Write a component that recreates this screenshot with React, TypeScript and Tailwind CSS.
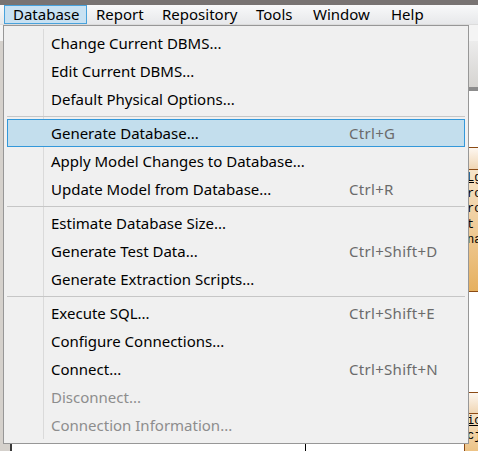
type Item = { label: string; shortcut?: string; disabled?: boolean; active?: boolean };

const groups: Item[][] = [
  [
    { label: "Change Current DBMS..." },
    { label: "Edit Current DBMS..." },
    { label: "Default Physical Options..." },
  ],
  [
    { label: "Generate Database...", shortcut: "Ctrl+G", active: true },
    { label: "Apply Model Changes to Database..." },
    { label: "Update Model from Database...", shortcut: "Ctrl+R" },
  ],
  [
    { label: "Estimate Database Size..." },
    { label: "Generate Test Data...", shortcut: "Ctrl+Shift+D" },
    { label: "Generate Extraction Scripts..." },
  ],
  [
    { label: "Execute SQL...", shortcut: "Ctrl+Shift+E" },
    { label: "Configure Connections..." },
    { label: "Connect...", shortcut: "Ctrl+Shift+N" },
    { label: "Disconnect...", disabled: true },
    { label: "Connection Information...", disabled: true },
  ],
];

const menus = [
  { label: "Database", w: "w-[83px]", open: true },
  { label: "Report", w: "w-[66px]" },
  { label: "Repository", w: "w-[94px]" },
  { label: "Tools", w: "w-[57px]" },
  { label: "Window", w: "w-[78px]" },
  { label: "Help", w: "w-[50px]" },
];

function MenuRow({ item }: { item: Item }) {
  return (
    <div
      className={
        "mx-[3px] grid h-[28px] grid-cols-[298px_1fr] items-center border pl-[43px] " +
        (item.active ? "border-[#3398da] bg-[#c3deed]" : "border-transparent")
      }
    >
      <span className={item.disabled ? "text-[#8d8d8d]" : "text-black"}>{item.label}</span>
      <span className="tracking-[0.3px] text-[#6b6b6b]">{item.shortcut}</span>
    </div>
  );
}

export default function App() {
  return (
    <div className="relative h-[451px] w-[478px] overflow-hidden bg-white font-['Noto_Sans',sans-serif] text-[15px]">
      <div className="h-[5px] bg-[#787372]" />
      <div className="flex h-[20px] items-stretch border-b border-[#dcdcdc] bg-gradient-to-b from-[#f8f9fa] to-[#e7e8ea] pl-[4px] text-black">
        {menus.map((m) => (
          <div
            key={m.label}
            className={
              m.w +
              " flex items-center border pl-[8px] " +
              (m.open ? "border-[#48a2dc] bg-[#c8e1f2]" : "border-transparent")
            }
          >
            {m.label}
          </div>
        ))}
      </div>

      <div className="flex h-[426px] flex-col">
        <div className="h-[16px] bg-[#f4f4f4]" />
        <div className="flex flex-1">
          <div className="w-[10px] bg-[#d5d1cc]" />
          <div className="w-[2px] bg-[#3a3a3a]" />
          <div className="flex flex-1 flex-col">
            <div className="h-[46px] bg-gradient-to-b from-[#ececec] to-[#d6d4d1]" />
            <div className="h-[4px] bg-[#8c8c8c]" />
            <div className="relative flex-1 bg-white">
              <div className="absolute left-[293px] top-[280px] h-[80px] w-[1px] bg-black" />
              <div className="absolute left-[452px] top-[56px] flex h-[145px] w-[120px] flex-col border border-[#8b4a14] font-['Liberation_Mono',monospace] text-[12px] text-black">
                <div className="h-[22px] border-b border-[#8b4a14] bg-gradient-to-b from-[#fdf7f0] to-[#f0d6b4]" />
                <div className="flex-1 bg-gradient-to-b from-[#f6e4c8] to-[#e6b05e] pl-[2px] pt-[1px] leading-[15.5px]">
                  <div className="underline">Lg</div>
                  <div>ro</div>
                  <div>ro</div>
                  <div>t</div>
                  <div>na</div>
                </div>
              </div>
              <div className="absolute left-[452px] top-[301px] flex h-[80px] w-[120px] flex-col border border-[#8b4a14] font-['Liberation_Mono',monospace] text-[12px] text-black">
                <div className="h-[21px] border-b border-[#8b4a14] bg-gradient-to-b from-[#fdf7f0] to-[#f0d6b4]" />
                <div className="flex-1 bg-gradient-to-b from-[#f6e4c8] to-[#e6b05e] pl-[2px] leading-[15px]">
                  <div className="underline">ic</div>
                  <div>cj</div>
                </div>
              </div>
            </div>
          </div>
        </div>
      </div>

      <div className="absolute left-[3px] top-[25px] h-[419px] w-[466px] border border-[#979797] bg-[#f0f0f0] py-[3px]">
        <div className="bg-[linear-gradient(to_right,transparent_39px,#dadada_39px,#dadada_40px,transparent_40px)]">
          {groups.map((g, gi) => (
            <div key={gi}>
              {gi > 0 && (
                <div className="mx-[3px] flex h-[6px] items-start pt-[3px]">
                  <div className="h-[1px] w-full bg-[#c6c6c6]" />
                </div>
              )}
              {g.map((it) => (
                <MenuRow key={it.label} item={it} />
              ))}
            </div>
          ))}
        </div>
      </div>
    </div>
  );
}
